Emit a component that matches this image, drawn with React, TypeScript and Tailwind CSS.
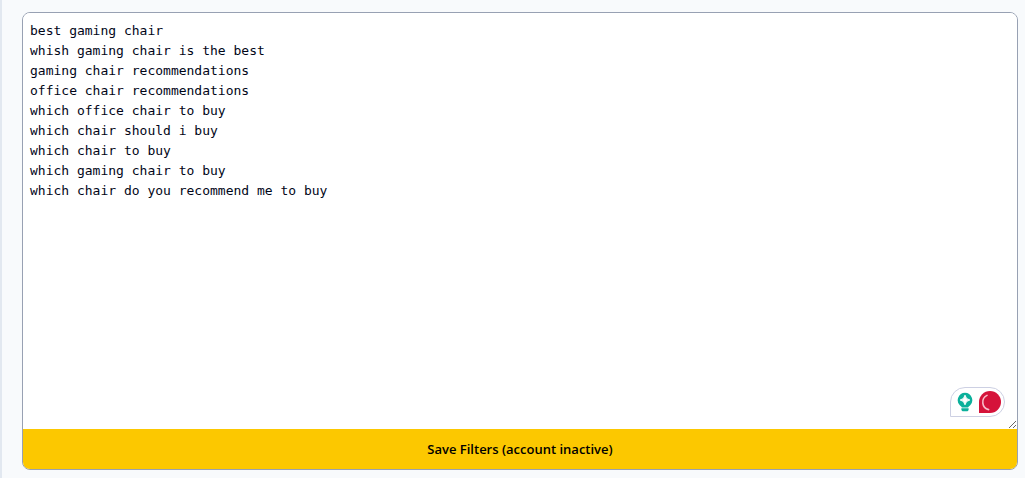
import { useState } from 'react';

const DEFAULT_KEYWORDS = [
    'best gaming chair',
    'whish gaming chair is the best',
    'gaming chair recommendations',
    'office chair recommendations',
    'which office chair to buy',
    'which chair should i buy',
    'which chair to buy',
    'which gaming chair to buy',
    'which chair do you recommend me to buy',
];

function BulbIcon() {
    return (
        <svg width="16" height="20" viewBox="0 0 16 20" aria-hidden="true">
            <path
                d="M8 0.8a7.4 7.4 0 0 0-5 12.7c1 .9 1.6 1.2 1.9 1.9h6.2c.3-.7.9-1 1.9-1.9A7.4 7.4 0 0 0 8 .8Z"
                fill="#0bb09b"
            />
            <path d="M8 3.2Q8.7 7.3 12.8 8 8.7 8.7 8 12.8 7.3 8.7 3.2 8 7.3 7.3 8 3.2Z" fill="#fff" stroke="#fff" strokeWidth="1" strokeLinejoin="round" />
            <path d="M4.4 16.3h7.2v.9c0 1.3-.8 2.1-2 2.1H6.4c-1.2 0-2-.8-2-2.1Z" fill="#0bb09b" />
        </svg>
    );
}

function StatusIcon() {
    return (
        <svg width="22" height="22" viewBox="0 0 22 22" aria-hidden="true">
            <path d="M0 22V11a11 11 0 1 1 11 11Z" fill="#d5133a" />
            <path d="M8 4.4a7.6 7.6 0 0 0 1.6 14.2" fill="none" stroke="#f7bcc8" strokeWidth="1.6" strokeLinecap="round" />
        </svg>
    );
}

export default function App() {
    const [keywords, setKeywords] = useState(DEFAULT_KEYWORDS.join('\n'));

    return (
        <main className="min-h-screen border-l-2 border-slate-200 bg-slate-50 pt-3 pr-[7px] pb-2 pl-5">
            <form
                onSubmit={(e) => e.preventDefault()}
                className="overflow-hidden rounded-lg border border-[#98a1b3] bg-white"
            >
                <div className="relative">
                    <textarea
                        aria-label="Keyword filters"
                        value={keywords}
                        onChange={(e) => setKeywords(e.target.value)}
                        spellCheck={false}
                        className="block h-[416px] w-full resize-y bg-white px-[7px] py-2 font-['DejaVu_Sans_Mono',monospace] text-[13px] leading-5 text-slate-950 outline-none"
                    />
                    <div className="absolute right-3 bottom-3 flex h-[30px] w-[55px] items-center justify-between rounded-full rounded-bl-none border border-[#cdd0e3] bg-white pr-[3px] pl-1.5">
                        <button type="button" aria-label="Suggestions">
                            <BulbIcon />
                        </button>
                        <button type="button" aria-label="Writing status">
                            <StatusIcon />
                        </button>
                    </div>
                </div>
                <button
                    type="submit"
                    className="block h-10 w-full bg-[#fcc800] font-['Open_Sans',sans-serif] text-[13px] leading-5 font-semibold text-black"
                >
                    Save Filters (account inactive)
                </button>
            </form>
        </main>
    );
}
